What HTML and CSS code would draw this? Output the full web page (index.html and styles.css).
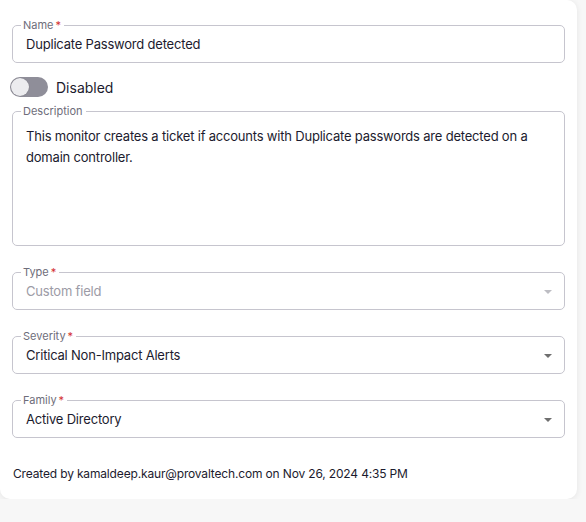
FILE: index.html
```html
<!DOCTYPE html>
<html>
<head>
<meta charset="utf-8">
<link rel="stylesheet" href="styles.css">
</head>
<body>
<div class="card">
  <fieldset class="field">
    <legend>Name<span class="req">*</span></legend>
    <div class="value">Duplicate Password detected</div>
  </fieldset>

  <div class="toggle-row">
    <span class="switch"><span class="knob"></span></span>
    <span class="toggle-label">Disabled</span>
  </div>

  <fieldset class="field desc">
    <legend>Description</legend>
    <div class="value text">This monitor creates a ticket if accounts with Duplicate passwords are detected on a domain controller.</div>
  </fieldset>

  <fieldset class="field select disabled">
    <legend>Type<span class="req">*</span></legend>
    <div class="value">Custom field</div>
    <span class="arrow"></span>
  </fieldset>

  <fieldset class="field select">
    <legend>Severity<span class="req">*</span></legend>
    <div class="value">Critical Non-Impact Alerts</div>
    <span class="arrow"></span>
  </fieldset>

  <fieldset class="field select">
    <legend>Family<span class="req">*</span></legend>
    <div class="value">Active Directory</div>
    <span class="arrow"></span>
  </fieldset>

  <div class="footer">Created by kamaldeep.kaur@provaltech.com on Nov 26, 2024 4:35 PM</div>
</div>
</body>
</html>
```
FILE: styles.css
```css
html, body {
  margin: 0;
  padding: 0;
  background: #f7f7f7;
}
body {
  font-family: Inter, "Noto Sans", sans-serif;
  color: #1c1b2e;
}
.card {
  width: 577px;
  box-sizing: border-box;
  background: #fff;
  border-radius: 0 10px 10px 10px;
  box-shadow: 0 1px 6px rgba(0,0,0,0.08);
  padding: 19px 12px 17px 12px;
  display: flex;
  flex-direction: column;
}
.field {
  position: relative;
  margin: 0;
  border: 1px solid #c6c5ce;
  border-radius: 5px;
  padding: 0 13px;
  height: 44px;
  box-sizing: border-box;
  min-width: 0;
}
.field legend {
  font-size: 11px;
  line-height: 12px;
  color: #6e6d7a;
  padding: 0 3px 0 2px;
  margin-left: -5px;
}
.req {
  color: #d32f2f;
  margin-left: 2px;
}
.value {
  font-size: 13px;
  letter-spacing: -0.2px;
  line-height: 20px;
  padding-top: 3px;
}
.toggle-row {
  display: flex;
  align-items: center;
  gap: 8px;
  margin: 14px 0 8px -2px;
  height: 20px;
}
.switch {
  width: 38px;
  height: 20px;
  border-radius: 10px;
  background: #8f8e99;
  position: relative;
  display: inline-block;
}
.knob {
  position: absolute;
  left: 1px;
  top: 1px;
  width: 18px;
  height: 18px;
  border-radius: 50%;
  background: #ececef;
  box-shadow: 0 0 1px rgba(0,0,0,0.3);
}
.toggle-label {
  font-size: 14px;
}
.desc {
  margin-top: 0;
  height: 141px;
}
.desc .value.text {
  line-height: 21px;
  padding-top: 9px;
  padding-right: 4px;
}
.select {
  margin-top: 20px;
}
.arrow {
  position: absolute;
  right: 12px;
  top: 12px;
  width: 0;
  height: 0;
  border-left: 4px solid transparent;
  border-right: 4px solid transparent;
  border-top: 4px solid #6f6f6f;
}
.disabled .value {
  color: #9c9ba6;
}
.disabled .arrow {
  border-top-color: #bdbdc3;
}
.footer {
  font-size: 12px;
  letter-spacing: -0.16px;
  margin-top: 28px;
  margin-left: 1px;
  line-height: 16px;
}
```
